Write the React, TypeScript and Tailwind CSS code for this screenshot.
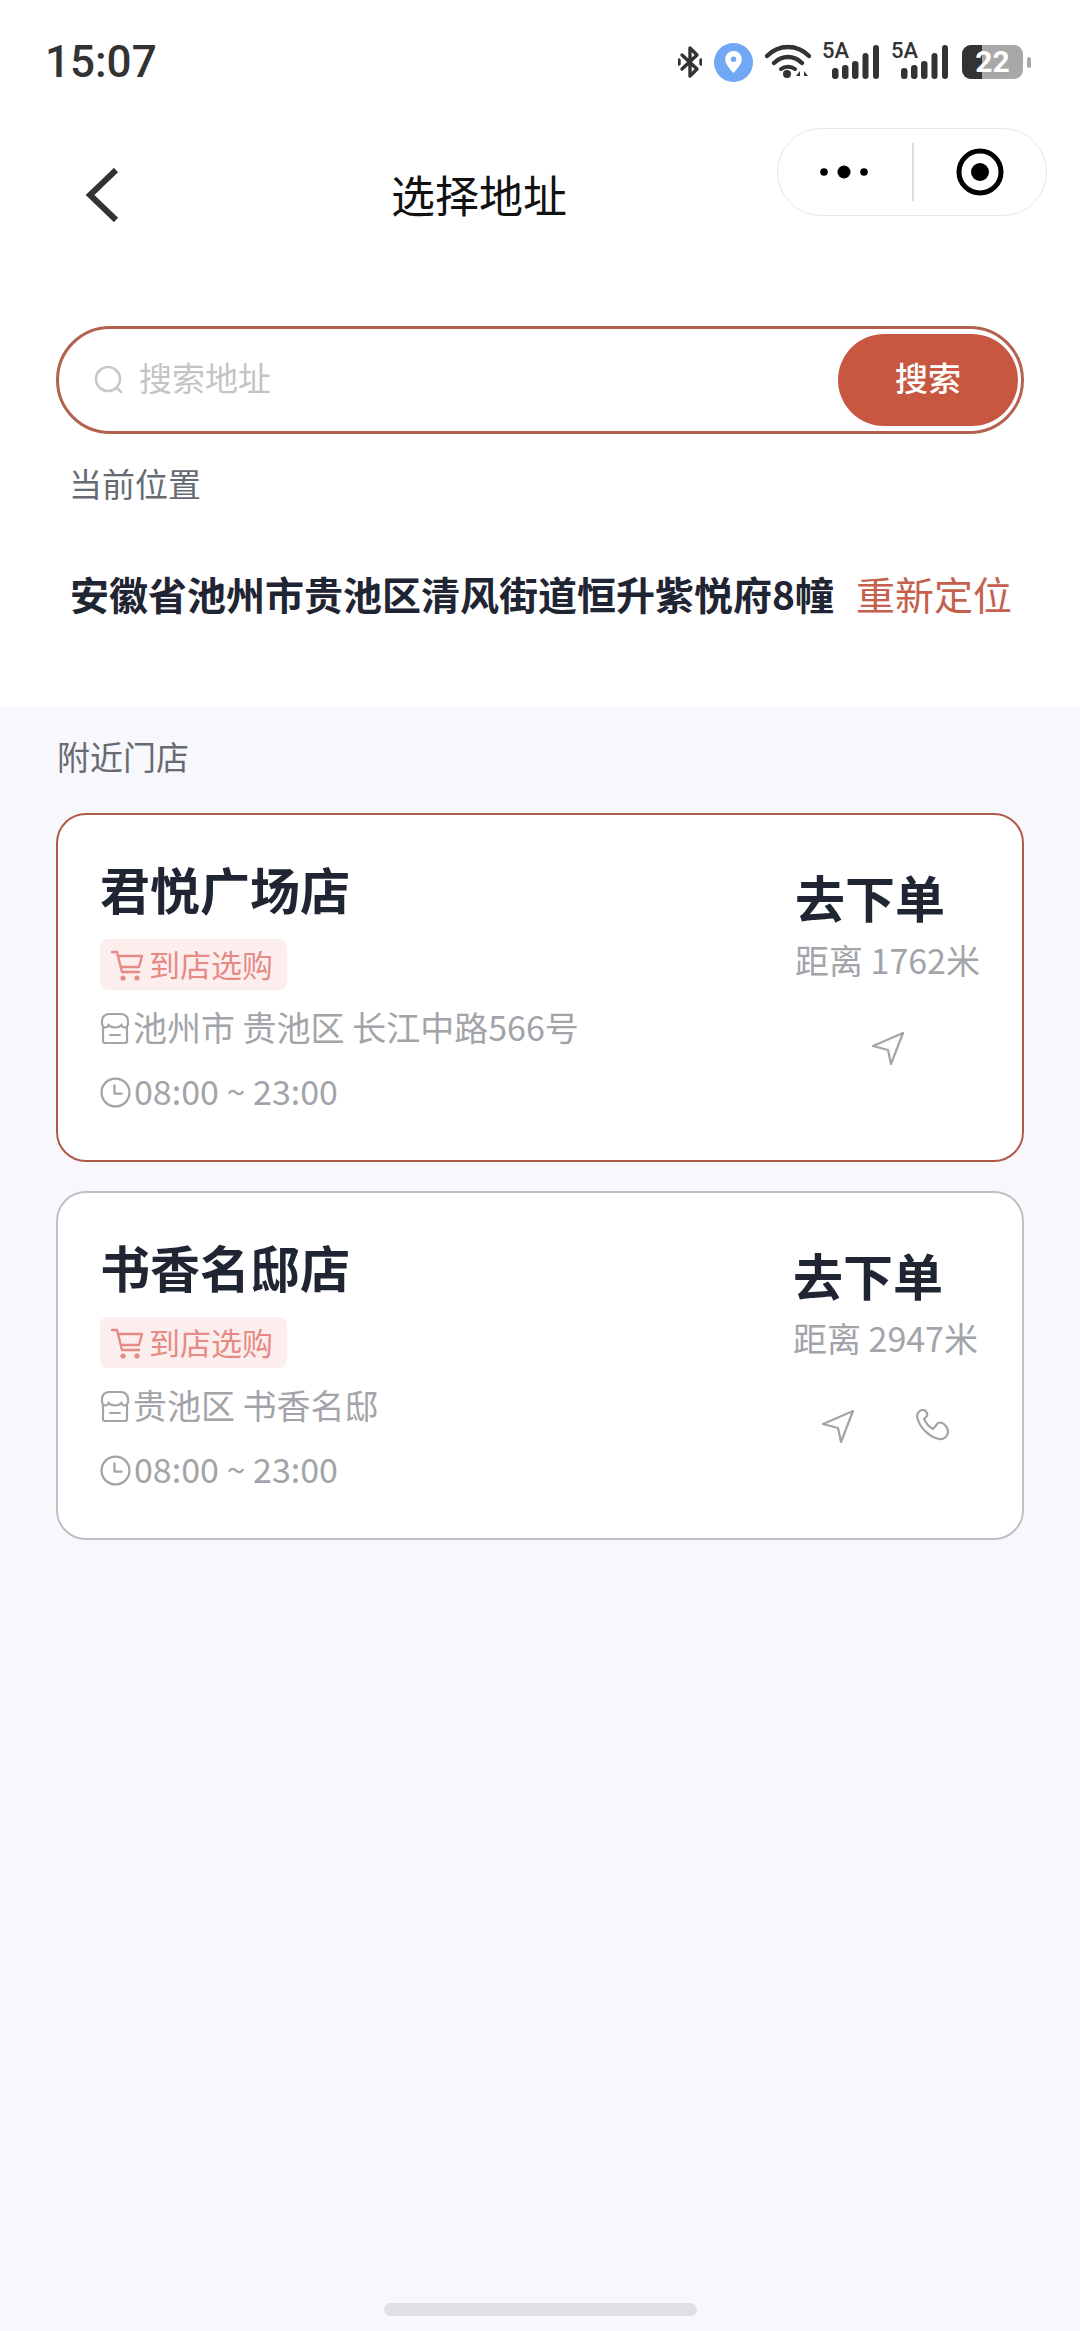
const cjk = "font-['Noto_Sans_CJK_SC','Noto_Sans',sans-serif]";

const stores = [
    {
        name: "君悦广场店",
        address: "池州市 贵池区 长江中路566号",
        distance: "距离 1762米",
        selected: true,
        phone: false,
    },
    {
        name: "书香名邸店",
        address: "贵池区 书香名邸",
        distance: "距离 2947米",
        selected: false,
        phone: true,
    },
];

const Signal = () => (
    <div className="relative h-[36px] w-[56px]">
        <span className="absolute left-[-1px] top-[-5px] font-['Roboto',sans-serif] text-[22px] leading-[24px] font-medium text-[#333333]">5A</span>
        <svg viewBox="0 0 56 36" className="h-[36px] w-[56px]" fill="#333333">
            <rect x="9" y="24" width="6.5" height="11" rx="3"/>
            <rect x="19" y="21" width="6.5" height="14" rx="3"/>
            <rect x="29" y="17" width="6.5" height="18" rx="3"/>
            <rect x="39.5" y="9" width="6" height="26" rx="3"/>
            <rect x="50" y="1" width="6" height="34" rx="3"/>
        </svg>
    </div>
);

const StatusBar = () => (
    <div className="flex h-[124px] items-center justify-between pl-[45px] pr-[49px]">
        <span className="font-['Roboto',sans-serif] text-[44px] font-medium text-[#333333]">15:07</span>
        <div className="flex items-center">
            <svg viewBox="0 0 24 34" className="h-[34px] w-[24px]" fill="none" stroke="#333333" strokeWidth="3.4" strokeLinecap="round" strokeLinejoin="round">
                <path d="M4 10l15 14-7 7V3l7 7L4 24"/>
                <path d="M1 15v4M23 15v4"/>
            </svg>
            <div className="ml-[12px] flex h-[39px] w-[39px] items-center justify-center rounded-full bg-[#70a8f5]">
                <svg viewBox="0 0 20 26" className="h-[24px] w-[19px]">
                    <path d="M10 1a9 9 0 0 1 9 9c0 6-6 11-9 15-3-4-9-9-9-15a9 9 0 0 1 9-9z" fill="#ffffff"/>
                    <circle cx="10" cy="10" r="3" fill="#70a8f5"/>
                </svg>
            </div>
            <svg viewBox="0 0 46 36" className="ml-[12px] h-[36px] w-[46px]" fill="none" stroke="#333333" strokeWidth="4.5" strokeLinecap="round">
                <path d="M2 12c12-12 30-12 42 0"/>
                <path d="M9 19c8-8 20-8 28 0"/>
                <path d="M16 25c4-3 10-3 14 0" strokeWidth="4"/>
                <circle cx="22" cy="30" r="4" fill="#333333" stroke="none"/>
                <path d="M35 27l-4 5h4zM39 27l4 5h-4z" fill="#333333" stroke="none"/>
            </svg>
            <div className="ml-[12px]"><Signal/></div>
            <div className="ml-[13px]"><Signal/></div>
            <div className="relative ml-[14px] flex h-[34px] w-[61px] overflow-hidden rounded-[9px] bg-[#a8a8a8]">
                <div className="h-full w-[20px] bg-[#333333]"/>
                <span className="absolute inset-0 flex items-center justify-center font-['Roboto',sans-serif] text-[30px] font-bold leading-none text-white">22</span>
            </div>
            <div className="ml-[4px] h-[11px] w-[4px] rounded-[2px] bg-[#a8a8a8]"/>
        </div>
    </div>
);

const NavBar = () => (
    <div className="relative flex h-[142px] items-center pl-[85px]">
        <svg viewBox="0 0 34 54" className="h-[54px] w-[34px]" fill="none" stroke="#333333" strokeWidth="6">
            <path d="M31 2L5 27l26 25"/>
        </svg>
        <h1 className="mb-[3px] ml-[272px] text-[44px] leading-[60px] text-[#111111]">选择地址</h1>
        <div className="absolute right-[33px] top-[4px] flex h-[88px] w-[270px] items-center rounded-full border-[1.5px] border-[#e8e8e8]">
            <svg viewBox="0 0 50 16" className="ml-[41px] h-[16px] w-[50px]" fill="#000000">
                <circle cx="5" cy="8" r="3.8"/>
                <circle cx="25" cy="8" r="6.5"/>
                <circle cx="45" cy="8" r="3.8"/>
            </svg>
            <div className="ml-[43px] h-[58px] w-[1.5px] bg-[#dddddd]"/>
            <svg viewBox="0 0 50 50" className="ml-[41px] h-[50px] w-[50px]">
                <circle cx="25" cy="25" r="21" fill="none" stroke="#000000" strokeWidth="5"/>
                <circle cx="25" cy="25" r="9" fill="#000000"/>
            </svg>
        </div>
    </div>
);

const SearchBar = () => (
    <div className="mx-[56px] mt-[60px] flex h-[108px] items-center rounded-full border-[3px] border-[#b5614f] pl-[35px] pr-[3px]">
        <svg viewBox="0 0 30 30" className="h-[30px] w-[30px]" fill="none" stroke="#c9c9c9" strokeWidth="2.6" strokeLinecap="round">
            <circle cx="14" cy="14" r="12"/>
            <path d="M23 23l4 4"/>
        </svg>
        <span className="mb-[4px] ml-[15px] text-[33px] text-[#c4c4c4]">搜索地址</span>
        <button className="ml-auto h-[92px] w-[180px] rounded-full bg-[#c85742] pb-[4px] text-[33px] font-medium text-white">搜索</button>
    </div>
);

const CartIcon = () => (
    <svg viewBox="0 0 34 34" className="h-[34px] w-[34px]" fill="none" stroke="#e68a86" strokeWidth="2.4" strokeLinecap="round" strokeLinejoin="round">
        <path d="M2 4h5l5 20h17"/>
        <path d="M9 8h23l-3 11H11"/>
        <circle cx="13" cy="30" r="1.4" fill="#e68a86"/>
        <circle cx="27" cy="30" r="1.4" fill="#e68a86"/>
    </svg>
);

const StoreIcon = () => (
    <svg viewBox="0 0 30 32" className="h-[32px] w-[30px] shrink-0" fill="none" stroke="#a2a4a9" strokeWidth="2.2" strokeLinecap="round" strokeLinejoin="round">
        <path d="M3 15v14a2 2 0 0 0 2 2h20a2 2 0 0 0 2-2V15"/>
        <path d="M9 2h12c4 0 7 3 7 7v3c0 2-2 3.500-3.500 3.500S21.500 14 21.500 12.500c0 1.500-3 3-6.500 3s-6.500-1.500-6.500-3c0 1.500-1.500 3-3 3S2 14 2 12V9c0-4 3-7 7-7z"/>
        <path d="M10 23h10"/>
    </svg>
);

const ClockIcon = () => (
    <svg viewBox="0 0 30 30" className="h-[31px] w-[31px] shrink-0" fill="none" stroke="#a2a4a9" strokeWidth="2.2" strokeLinecap="round" strokeLinejoin="round">
        <circle cx="15" cy="15" r="13.5"/>
        <path d="M14 8v8h7"/>
    </svg>
);

const SendIcon = () => (
    <svg viewBox="0 0 34 34" className="h-[34px] w-[34px]" fill="none" stroke="#a2a4a9" strokeWidth="2.2" strokeLinecap="round" strokeLinejoin="round">
        <path d="M32 2L2 15l15 4 3 14z"/>
    </svg>
);

const PhoneIcon = () => (
    <svg viewBox="0 0 34 34" className="h-[34px] w-[34px]" fill="none" stroke="#a2a4a9" strokeWidth="2.2" strokeLinecap="round" strokeLinejoin="round">
        <path d="M6 1C2 2 0 6 2 11C5 20 14 28 23 30C28 31 32 27 32 23C32 17 26 12 22 14L17 20C13 18 10 14 8 10L11 7C12 4 9 0 6 1z"/>
    </svg>
);

const StoreCard = ({store}: { store: typeof stores[number] }) => (
    <div className={`flex h-[349px] justify-between rounded-[30px] border-2 bg-white pl-[42px] ${store.selected ? 'border-[#b05a4a] pr-[42px]' : 'border-[#c0c0c4] pr-[44px]'}`}>
        <div className="pt-[43px]">
            <h2 className="text-[50px] font-semibold leading-[60px] text-[#1f2533]">{store.name}</h2>
            <div className="mt-[21px] flex h-[51px] w-[187px] items-center rounded-[8px] bg-[#fdeeee] pl-[10px]">
                <CartIcon/>
                <span className="mb-[3px] ml-[5px] text-[31px] leading-none text-[#e68a86]">到店选购</span>
            </div>
            <div className="mt-[16px] flex h-[44px] items-center text-[34px] text-[#a2a4a9]">
                <StoreIcon/>
                <span className="mb-[4px] ml-[3px]">{store.address}</span>
            </div>
            <div className="mt-[20px] flex h-[44px] items-center text-[34px] text-[#a2a4a9]">
                <ClockIcon/>
                <span className="mb-[3px] ml-[3px]">08:00 ~ 23:00</span>
            </div>
        </div>
        <div className="pt-[51px]">
            <div className="text-[50px] font-semibold leading-[60px] text-[#1f2533]">去下单</div>
            <div className="mt-[12px] h-[44px] text-[34px] leading-[44px] text-[#a2a4a9]">{store.distance}</div>
            <div className={`mt-[46px] flex h-[40px] items-center justify-center ${store.phone ? 'gap-[61px] pl-[1px]' : 'pl-[2px]'}`}>
                <SendIcon/>
                {store.phone && <PhoneIcon/>}
            </div>
        </div>
    </div>
);

export default function App() {
    return (
        <div className={`flex h-[2331px] w-[1080px] flex-col overflow-hidden bg-[#f7f7fc] ${cjk}`}>
            <div className="h-[707px] bg-white">
                <StatusBar/>
                <NavBar/>
                <SearchBar/>
                <div className="mt-[26px] pl-[69px] text-[33px] leading-[46px] text-[#666b73]">当前位置</div>
                <div className="mt-[62px] flex items-center pl-[70px] text-[39px] leading-[50px]">
                    <span className="font-semibold text-[#1f2533]">安徽省池州市贵池区清风街道恒升紫悦府8幢</span>
                    <span className="ml-[22px] text-[#c4604d]">重新定位</span>
                </div>
            </div>
            <div className="mt-[26px] pl-[57px] text-[33px] leading-[46px] text-[#666b73]">附近门店</div>
            <div className="mt-[34px] flex flex-col gap-[29px] px-[56px]">
                {stores.map(store => <StoreCard key={store.name} store={store}/>)}
            </div>
            <div className="mx-auto mb-[15px] mt-auto h-[13px] w-[313px] rounded-full bg-[#e0e0e4]"/>
        </div>
    );
}
